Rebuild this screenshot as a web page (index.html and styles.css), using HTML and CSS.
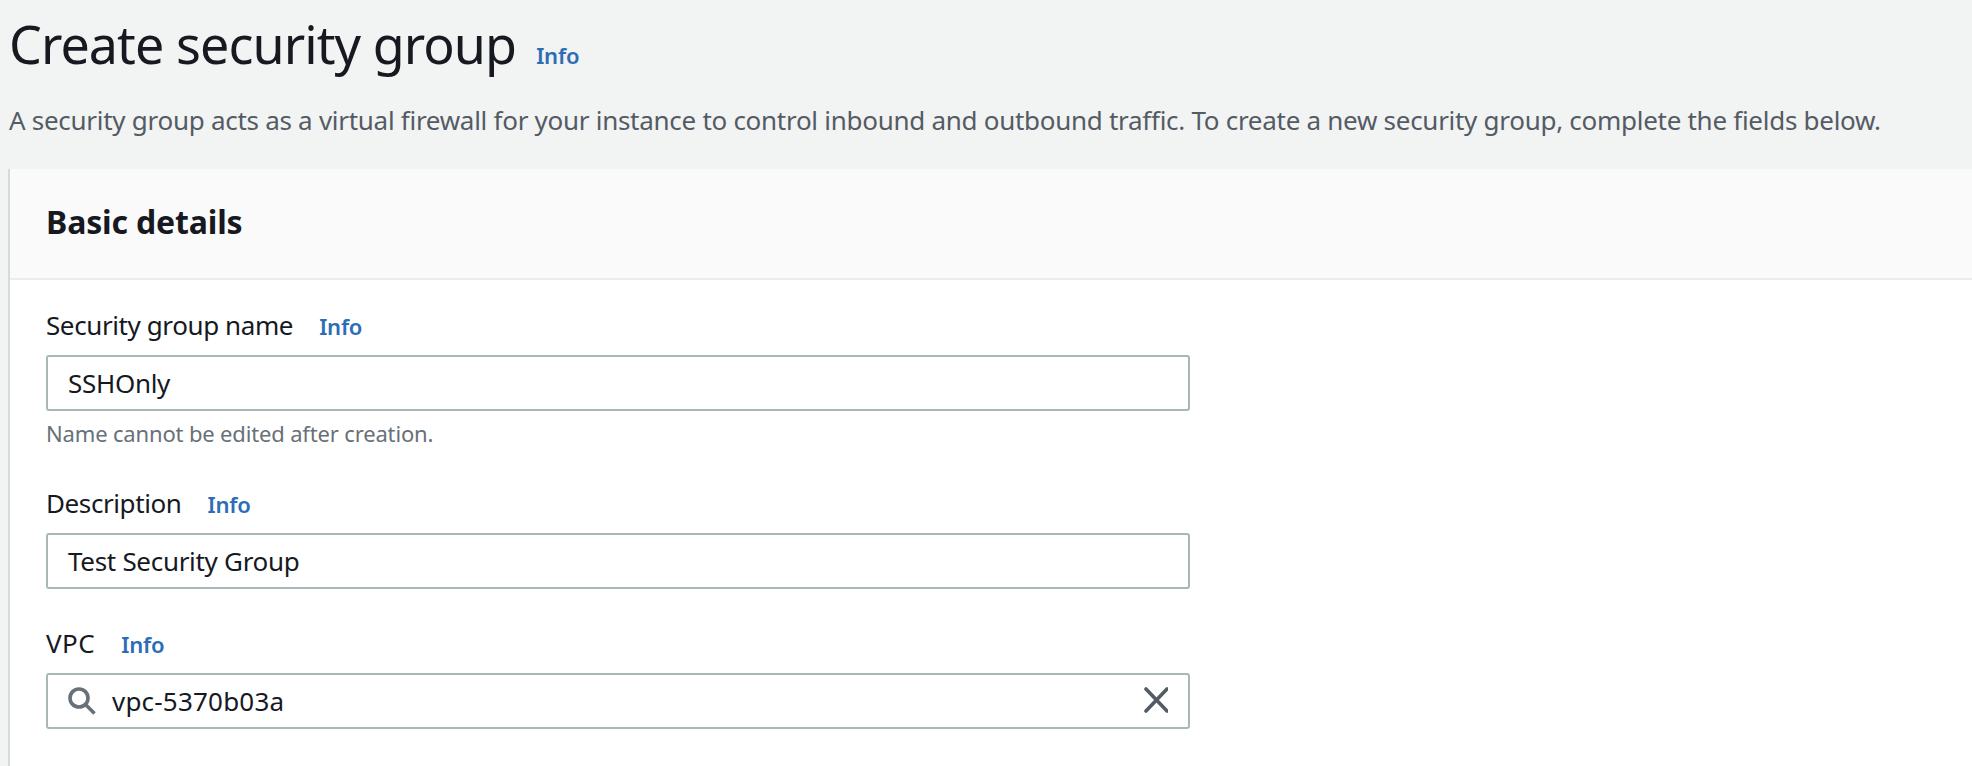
FILE: index.html
```html
<!DOCTYPE html>
<html lang="en">
<head>
<meta charset="utf-8">
<title>Create security group</title>
<link rel="stylesheet" href="styles.css">
</head>
<body>
<header class="page-head">
  <div class="title-row">
    <h1 class="title">Create security group</h1>
    <a class="info info-title">Info</a>
  </div>
  <p class="lead">A security group acts as a virtual firewall for your instance to control inbound and outbound traffic. To create a new security group, complete the fields below.</p>
</header>
<section class="panel">
  <div class="panel-head"><h2 class="panel-title">Basic details</h2></div>
  <div class="panel-body">
    <div class="field field-name">
      <div class="label-row"><span class="label">Security group name</span><a class="info">Info</a></div>
      <div class="input"><span class="value">SSHOnly</span></div>
      <div class="hint">Name cannot be edited after creation.</div>
    </div>
    <div class="field field-desc">
      <div class="label-row"><span class="label">Description</span><a class="info">Info</a></div>
      <div class="input"><span class="value">Test Security Group</span></div>
    </div>
    <div class="field field-vpc">
      <div class="label-row"><span class="label label-vpc">VPC</span><a class="info">Info</a></div>
      <div class="input input-search">
        <svg class="icon-search" viewBox="0 0 28 28" width="28" height="28"><circle cx="11" cy="11" r="9" fill="none" stroke="#687078" stroke-width="3.6"/><path d="M17.5 17.5L26.5 26.5" fill="none" stroke="#687078" stroke-width="3.6"/></svg>
        <span class="value value-vpc">vpc-5370b03a</span>
        <svg class="icon-clear" viewBox="0 0 26 26" width="26" height="26"><path d="M4 2L25 24M25 2L4 24" fill="none" stroke="#545b64" stroke-width="3.6" stroke-linecap="round"/></svg>
      </div>
    </div>
  </div>
</section>
</body>
</html>
```
FILE: styles.css
```css
* { box-sizing: border-box; }
html, body { margin: 0; height: 100%; overflow: hidden; }
body {
  background: #f2f3f3;
  font-family: "Noto Sans", "Open Sans", sans-serif;
  color: #16191f;
  font-size: 26px;
}
.page-head { padding: 0 0 0 9px; height: 169px; }
.title-row { display: flex; align-items: baseline; padding-top: 12px; height: 84px; }
.title { margin: 0; font-size: 52px; line-height: 64px; font-weight: 400; letter-spacing: -0.92px; }
.info { color: #2c6db5; font-weight: 600; font-size: 22px; letter-spacing: -0.2px; }
.info-title { margin-left: 20px; }
.lead { margin: 18px 0 0; font-size: 26px; line-height: 36px; color: #545b64; letter-spacing: -0.28px; white-space: nowrap; }
.panel { margin-left: 8px; background: #fff; border-left: 2px solid #d5dbdb; height: 597px; }
.panel-head { background: #fafafa; height: 111px; border-bottom: 2px solid #eaeded; padding: 32px 0 0 36px; }
.panel-title { margin: 0; font-size: 32px; line-height: 42px; font-weight: 700; letter-spacing: -0.15px; }
.panel-body { padding: 27px 0 0 36px; }
.field { width: 1144px; }
.field-desc { margin-top: 37px; }
.field-vpc { margin-top: 36px; }
.label-row { display: flex; align-items: baseline; height: 48px; line-height: 36px; }
.label { font-size: 26px; letter-spacing: -0.4px; }
.label-vpc { letter-spacing: 0.5px; }
.label + .info { margin-left: 26px; }
.input {
  display: flex;
  align-items: center;
  height: 56px;
  background: #fff;
  border: 2px solid #aab7b8;
  border-radius: 3px;
  padding: 0 20px;
}
.value { font-size: 26px; letter-spacing: -0.3px; color: #16191f; }
.value-vpc { letter-spacing: 0.2px; }
.hint { font-size: 22px; line-height: 30px; margin-top: 7px; margin-bottom: 1px; color: #687078; letter-spacing: -0.16px; }
.input-search { gap: 16px; }
.icon-search { flex: none; }
.icon-clear { flex: none; margin-left: auto; margin-bottom: 3px; }
```
